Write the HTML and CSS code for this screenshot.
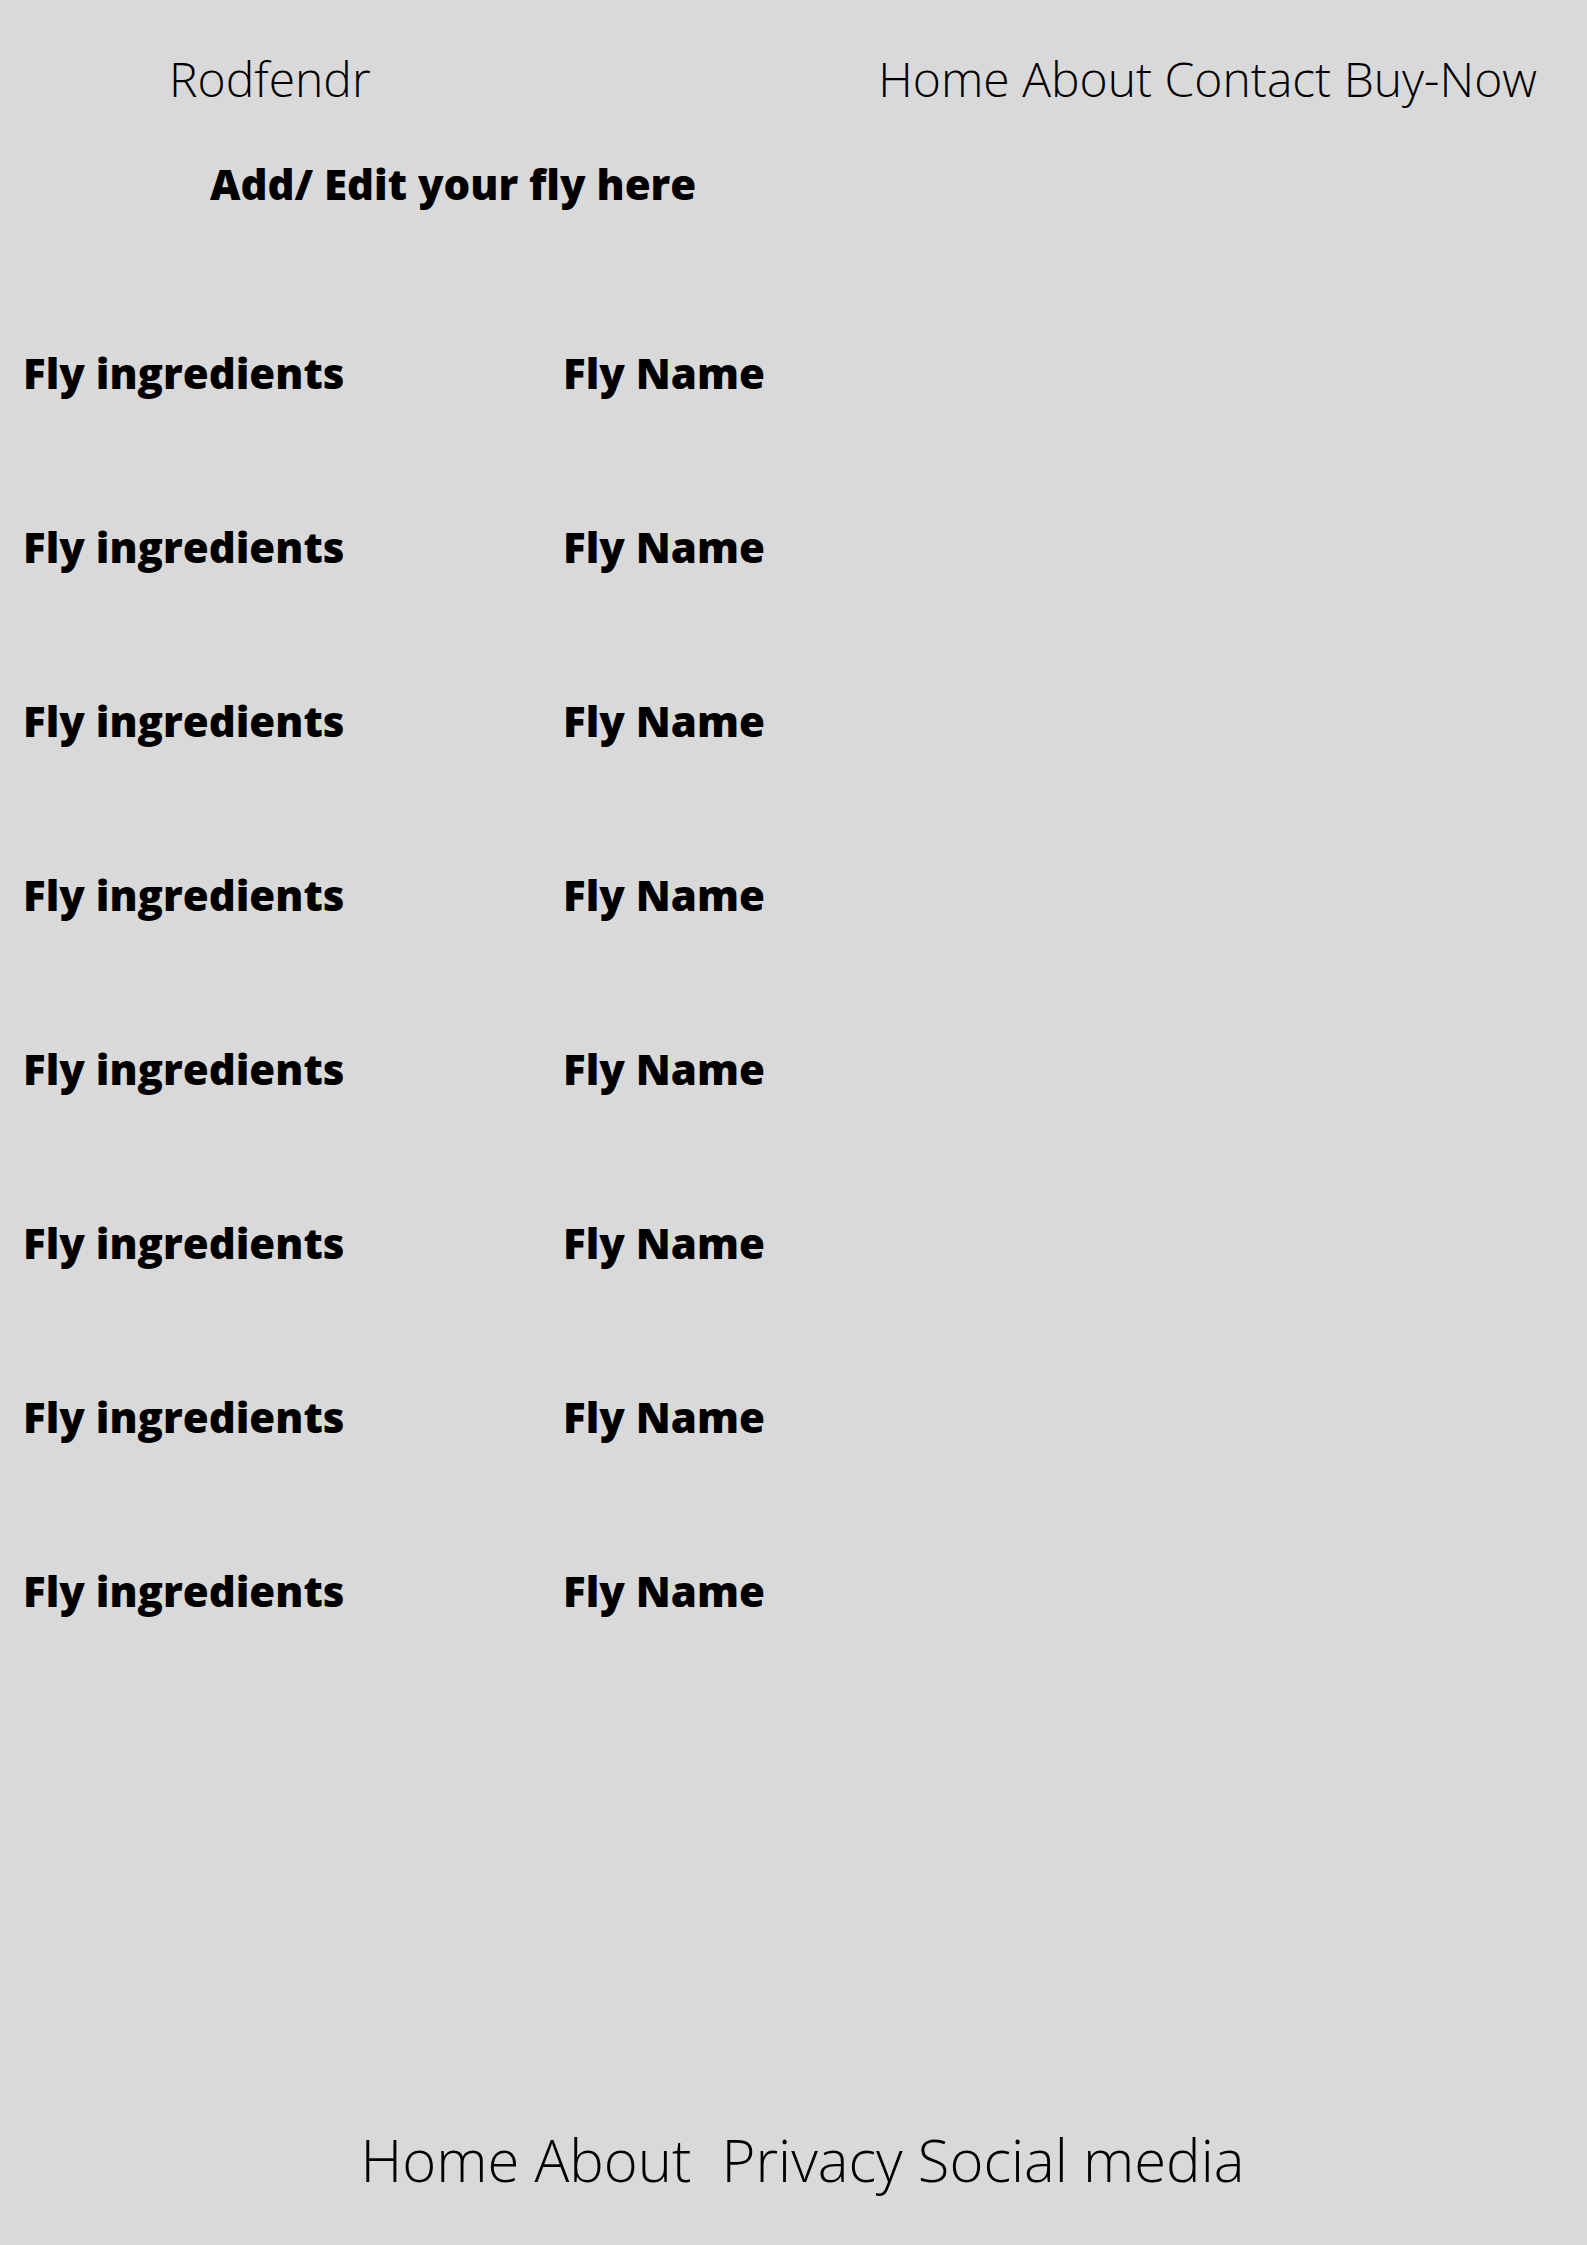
FILE: index.html
```html
<!DOCTYPE html>
<html lang="en">
<head>
<meta charset="utf-8">
<title>Rodfendr</title>
<link rel="stylesheet" href="styles.css">
</head>
<body>
<div class="page">
  <header class="header">
    <div class="logo">Rodfendr</div>
    <nav class="nav">Home About Contact Buy-Now</nav>
  </header>
  <h1 class="title">Add/ Edit your fly here</h1>
  <main class="list">
    <div class="row"><span class="ingredients">Fly ingredients</span><span class="name">Fly Name</span></div>
    <div class="row"><span class="ingredients">Fly ingredients</span><span class="name">Fly Name</span></div>
    <div class="row"><span class="ingredients">Fly ingredients</span><span class="name">Fly Name</span></div>
    <div class="row"><span class="ingredients">Fly ingredients</span><span class="name">Fly Name</span></div>
    <div class="row"><span class="ingredients">Fly ingredients</span><span class="name">Fly Name</span></div>
    <div class="row"><span class="ingredients">Fly ingredients</span><span class="name">Fly Name</span></div>
    <div class="row"><span class="ingredients">Fly ingredients</span><span class="name">Fly Name</span></div>
    <div class="row"><span class="ingredients">Fly ingredients</span><span class="name">Fly Name</span></div>
  </main>
  <footer class="footer">Home About  Privacy Social media</footer>
</div>
</body>
</html>
```
FILE: styles.css
```css
html, body {
  margin: 0;
  padding: 0;
  background: #d9d9d9;
}
body {
  font-family: "Open Sans", "Liberation Sans", sans-serif;
  color: #000;
}
.page {
  min-height: 2245px;
  display: flex;
  flex-direction: column;
}
.header {
  display: flex;
  justify-content: space-between;
  align-items: flex-start;
  padding: 55px 50px 0 169px;
  font-weight: 300;
  font-size: 48px;
  line-height: 1;
}
.title {
  margin: 60px 0 0 210px;
  font-size: 42px;
  font-weight: 800;
  line-height: 1;
}
.list {
  display: flex;
  flex-direction: column;
  gap: 132px;
  margin-top: 147px;
  padding-left: 23px;
}
.row {
  display: grid;
  grid-template-columns: 540px auto;
  font-size: 42px;
  font-weight: 800;
  line-height: 1;
}
.footer {
  margin-top: auto;
  padding: 0 0 56px 18px;
  text-align: center;
  white-space: pre;
  font-weight: 300;
  font-size: 58px;
  line-height: 1;
}
```
